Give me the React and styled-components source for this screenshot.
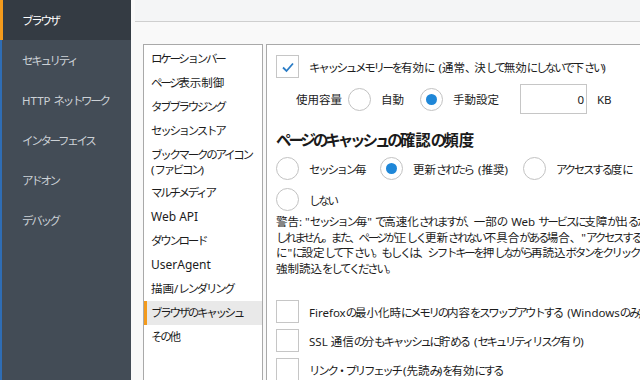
import styled, { createGlobalStyle } from 'styled-components';

const GlobalStyle = createGlobalStyle`
  html, body {
    margin: 0;
    padding: 0;
  }
  body {
    font-family: "Noto Sans", "Noto Sans CJK JP", sans-serif;
    color: #1c1c1c;
  }
`;

const Window = styled.div`
  display: flex;
  width: 640px;
  height: 380px;
  overflow: hidden;
  background: #f9f9f9;
`;

const Sidebar = styled.nav`
  flex: 0 0 131px;
  background: #434c56;
  box-shadow: inset 2px 0 0 #2f6db4;
  display: flex;
  flex-direction: column;
`;

const NavItem = styled.div`
  height: 40px;
  display: flex;
  align-items: center;
  padding-left: 22px;
  font-size: 11.5px;
  white-space: pre;
  color: ${props => props.$active ? '#ffffff' : '#ccd1d6'};
  background: ${props => props.$active ? '#343b43' : 'transparent'};
  box-shadow: ${props => props.$active ? 'inset 3px 0 0 #f39a1c' : 'none'};
`;

const Main = styled.div`
  flex: 1;
  display: flex;
  flex-direction: column;
  min-width: 0;
`;

const TopBar = styled.div`
  height: 21px;
  margin-left: 4px;
  border-bottom: 1px solid #cfcfcf;
  background: #f4f5f6;
`;

const Body = styled.div`
  flex: 1;
  display: flex;
  gap: 3px;
  padding: 22px 0 0 12px;
  min-height: 0;
`;

const CategoryList = styled.ul`
  flex: 0 0 118px;
  min-width: 0;
  overflow: hidden;
  margin: 0;
  padding: 2px 0 0;
  list-style: none;
  background: #fff;
  border: 1px solid #a9a9a9;
  border-bottom: none;
`;

const CategoryItem = styled.li`
  padding: 4px 0 4px 7px;
  font-size: ${props => props.$latin ? '12px' : '11.5px'};
  line-height: ${props => props.$twoLine ? '15px' : '16px'};
  white-space: nowrap;
  background: ${props => props.$active ? '#e9e9e9' : 'transparent'};
  box-shadow: ${props => props.$active ? 'inset 3px 0 0 #f39a1c' : 'none'};
`;

const Panel = styled.section`
  flex: 1;
  background: #fff;
  border-top: 1px solid #a9a9a9;
  border-left: 1px solid #a9a9a9;
  padding: 10px 0 0 9px;
  min-width: 0;
  white-space: nowrap;
  font-size: 11.5px;
`;

/* kana runs are set tighter, like the narrow kana of the UI font */
const Kana = styled.span`
  letter-spacing: -0.2em;
`;

const KANA_RUN = /([\u3000-\u30ff]+)/;

const Jp = ({ text }) => {
  const parts = text.split(KANA_RUN);
  return (
    <>
      {parts.map((part, i) => {
        if (i % 2 === 0) return part;
        // keep the gap before a following space or bracket
        const next = parts[i + 1] || '';
        if (/^[ ("]/.test(next)) {
          return <span key={i}><Kana>{part.slice(0, -1)}</Kana>{part.slice(-1)}</span>;
        }
        return <Kana key={i}>{part}</Kana>;
      })}
    </>
  );
};

const Row = styled.div`
  display: flex;
  align-items: center;
  gap: 10px;
  margin-top: ${props => props.$top || 0}px;
`;

const OptionGrid = styled.div`
  display: grid;
  grid-template-columns: ${props => props.$columns};
  align-items: center;
  padding-left: ${props => props.$indent || 0}px;
  margin-top: ${props => props.$top || 0}px;
`;

const Box = styled.span`
  flex: 0 0 auto;
  width: 21px;
  height: 21px;
  border: 1px solid #c6c6c6;
  background: #fff;
  display: flex;
  align-items: center;
  justify-content: center;
`;

const Circle = styled.span`
  flex: 0 0 auto;
  width: 21px;
  height: 21px;
  border: 1px solid #c2c2c2;
  border-radius: 50%;
  background: #fff;
  display: flex;
  align-items: center;
  justify-content: center;

  &::after {
    content: '';
    display: ${props => props.$checked ? 'block' : 'none'};
    width: 11px;
    height: 11px;
    border-radius: 50%;
    background: #1f87d8;
  }
`;

const Option = styled.label`
  display: flex;
  align-items: center;
  gap: 10px;
`;

const SizeInput = styled.div`
  width: 63px;
  height: 28px;
  border: 1px solid #c6c6c6;
  display: flex;
  align-items: center;
  justify-content: flex-end;
  padding-right: 2px;
`;

const Unit = styled.span`
  margin-left: 10px;
`;

const Heading = styled.h2`
  margin: 15px 0 6px;
  font-size: 15.5px;
  line-height: 22px;
  font-weight: 700;
  color: #1a1a1a;
`;

const Warning = styled.p`
  margin: 3px 0 0;
  line-height: 15.5px;
`;

const Check = () => (
  <svg width="16" height="16" viewBox="0 0 16 16">
    <path d="M3 8.5 L6.5 12 L13 4.5" fill="none" stroke="#2a7cc6" strokeWidth="1.8" />
  </svg>
);

const navItems = ['ブラウザ', 'セキュリティ', 'HTTP ネットワーク', 'インターフェイス', 'アドオン', 'デバッグ'];

const categories = [
  'ロケーションバー',
  'ページ表示制御',
  'タブブラウジング',
  'セッションストア',
  ['ブックマークのアイコン', '(ファビコン)'],
  'マルチメディア',
  'Web API',
  'ダウンロード',
  'UserAgent',
  '描画/レンダリング',
  'ブラウザのキャッシュ',
  'その他'
];

const latin = ['Web API', 'UserAgent'];

const warningLines = [
  '警告: "セッション毎" で高速化されますが、一部の Web サービスに支障が出るかも',
  'しれません。また、ページが正しく更新されない不具合がある場合、"アクセスする度',
  'に"に設定して下さい。もしくは、シフトキーを押しながら再読込ボタンをクリックして',
  '強制読込をしてください。'
];

const App = () => {
  return (
    <>
      <GlobalStyle />
      <Window>
        <Sidebar>
          {navItems.map((item, i) => (
            <NavItem key={item} $active={i === 0}><Jp text={item} /></NavItem>
          ))}
        </Sidebar>

        <Main>
          <TopBar />
          <Body>
            <CategoryList>
              {categories.map((c) => Array.isArray(c) ? (
                <CategoryItem key={c[0]} $twoLine><Jp text={c[0]} /><br /><Jp text={c[1]} /></CategoryItem>
              ) : (
                <CategoryItem
                  key={c}
                  $latin={latin.includes(c)}
                  $active={c === 'ブラウザのキャッシュ'}
                >
                  <Jp text={c} />
                </CategoryItem>
              ))}
            </CategoryList>

            <Panel>
              <Row>
                <Box><Check /></Box>
                <span><Jp text="キャッシュメモリーを有効に (通常、決して無効にしないで下さい)" /></span>
              </Row>

              <OptionGrid $columns="52px 72px 100px 67px auto" $indent={20} $top={6}>
                <span>使用容量</span>
                <Option><Circle />自動</Option>
                <Option><Circle $checked />手動設定</Option>
                <SizeInput>0</SizeInput>
                <Unit>KB</Unit>
              </OptionGrid>

              <Heading><Jp text="ページのキャッシュの確認の頻度" /></Heading>

              <OptionGrid $columns="104px 143px auto">
                <Option><Circle /><span><Jp text="セッション毎" /></span></Option>
                <Option><Circle $checked /><span><Jp text="更新されたら (推奨)" /></span></Option>
                <Option><Circle /><span><Jp text="アクセスする度に" /></span></Option>
              </OptionGrid>
              <OptionGrid $columns="auto" $top={8}>
                <Option><Circle /><span><Jp text="しない" /></span></Option>
              </OptionGrid>

              <Warning>
                {warningLines.map((line, i) => (
                  <span key={i}><Jp text={line} />{i < warningLines.length - 1 && <br />}</span>
                ))}
              </Warning>

              <Row $top={24}>
                <Box />
                <span><Jp text="Firefoxの最小化時にメモリの内容をスワップアウトする (Windowsのみ)" /></span>
              </Row>
              <Row $top={6}>
                <Box />
                <span><Jp text="SSL 通信の分もキャッシュに貯める (セキュリティリスク有り)" /></span>
              </Row>
              <Row $top={6}>
                <Box />
                <span><Jp text="リンク・プリフェッチ(先読み)を有効にする" /></span>
              </Row>
            </Panel>
          </Body>
        </Main>
      </Window>
    </>
  );
};

export default App;
